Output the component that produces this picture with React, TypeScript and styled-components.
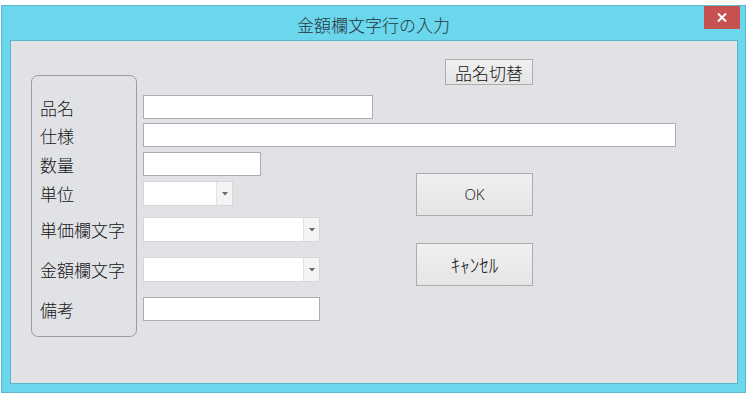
import React from 'react';
import styled, { createGlobalStyle } from 'styled-components';

const Global = createGlobalStyle`
  html, body { margin: 0; padding: 0; background: #ffffff; }
  body { font-family: "Noto Sans CJK JP", "Noto Sans", sans-serif; font-weight: 300; }
  * { box-sizing: border-box; }
`;

const Window = styled.div`
  margin: 5px 0 0 1px;
  width: 745px;
  height: 388px;
  border: 1px solid #5cb9d0;
  background: #6ad7ed;
  display: flex;
  flex-direction: column;
`;

const TitleBar = styled.div`
  height: 34px;
  display: grid;
  grid-template-columns: 1fr auto 1fr;
`;

const Title = styled.div`
  grid-column: 2;
  align-self: center;
  font-size: 17px;
  line-height: 1;
  color: #27363b;
  padding-top: 2px;
`;

const CloseButton = styled.button`
  grid-column: 3;
  justify-self: end;
  align-self: start;
  width: 36px;
  height: 23px;
  margin-right: 5px;
  border: none;
  padding: 0;
  background: #c75050;
  display: flex;
  align-items: center;
  justify-content: center;
`;

const Client = styled.div`
  flex: 1;
  margin: 0 7px 8px 8px;
  border: 1px solid #58b6cc;
  background: #e1e2e6;
  padding: 18px 0 0 20px;
  display: flex;
  align-items: flex-start;
  gap: 6px;
`;

const GroupBox = styled.div`
  margin-top: 16px;
  width: 106px;
  border: 1px solid #9c9c9c;
  border-radius: 7px;
  padding: 19px 0 15px 8px;
  display: flex;
  flex-direction: column;
`;

const LabelRow = styled.div<{ $h: number; $gap: number }>`
  height: ${p => p.$h}px;
  margin-top: ${p => p.$gap}px;
  display: flex;
  align-items: center;
  font-size: 17px;
  color: #151515;
  white-space: nowrap;
`;

const Fields = styled.div`
  width: 533px;
  display: flex;
  flex-direction: column;
`;

const Header = styled.div`
  height: 26px;
  display: flex;
  padding-left: 302px;
  margin-bottom: 10px;
`;

const FieldRow = styled.div<{ $h: number; $gap: number }>`
  height: ${p => p.$h}px;
  margin-top: ${p => p.$gap}px;
  display: flex;
`;

const Lower = styled.div`
  margin-top: 5px;
  display: flex;
`;

const LowerFields = styled.div`
  width: 273px;
  display: flex;
  flex-direction: column;
`;

const ButtonColumn = styled.div`
  width: 117px;
  display: flex;
  flex-direction: column;
`;

const TextBox = styled.input<{ $w: number }>`
  width: ${p => p.$w}px;
  height: 100%;
  border: 1px solid #abadb3;
  background: #ffffff;
  padding: 0 3px;
  font: inherit;
  outline: none;
`;

const Combo = styled.div<{ $w: number }>`
  width: ${p => p.$w}px;
  height: 100%;
  border: 1px solid #d6d7da;
  background: #ffffff;
  display: flex;
`;

const ComboText = styled.div`
  flex: 1;
`;

const ComboArrow = styled.div`
  width: 16px;
  border-left: 1px solid #e1e1e1;
  background: #f4f4f5;
  display: flex;
  align-items: center;
  justify-content: center;
`;

const PushButton = styled.button<{ $w: number; $h: number; $gap?: number; $size: number }>`
  width: ${p => p.$w}px;
  height: ${p => p.$h}px;
  margin-top: ${p => p.$gap ?? 0}px;
  border: 1px solid #acacac;
  background: linear-gradient(#f0f0f0, #e5e5e5);
  padding: 0;
  font-family: "Noto Sans CJK JP", "Noto Sans", sans-serif;
  font-weight: 300;
  font-size: ${p => p.$size}px;
  color: #111;
  display: flex;
  align-items: center;
  justify-content: center;
  line-height: 1;
`;

const Latin = styled.span`
  font-family: "Open Sans", "Noto Sans", sans-serif;
  font-weight: 300;
`;

type Spec = { label: string; gap: number; h: number; kind: 'text' | 'combo'; w: number };

const rows: Spec[] = [
  { label: '品名', gap: 0, h: 24, kind: 'text', w: 230 },
  { label: '仕様', gap: 4, h: 24, kind: 'text', w: 533 },
  { label: '数量', gap: 5, h: 24, kind: 'text', w: 118 },
  { label: '単位', gap: 5, h: 25, kind: 'combo', w: 90 },
  { label: '単価欄文字', gap: 11, h: 25, kind: 'combo', w: 177 },
  { label: '金額欄文字', gap: 15, h: 25, kind: 'combo', w: 177 },
  { label: '備考', gap: 15, h: 24, kind: 'text', w: 177 },
];

const Arrow = () => (
  <svg width="6" height="4" viewBox="0 0 6 4">
    <path d="M0 0 H6 L3 3.5 Z" fill="#6a6a6a" />
  </svg>
);

const Field = ({ s, gap }: { s: Spec; gap: number }) => (
  <FieldRow $h={s.h} $gap={gap}>
    {s.kind === 'text' ? (
      <TextBox $w={s.w} defaultValue="" />
    ) : (
      <Combo $w={s.w}>
        <ComboText />
        <ComboArrow>
          <Arrow />
        </ComboArrow>
      </Combo>
    )}
  </FieldRow>
);

export default function App() {
  const upper = rows.slice(0, 2);
  const lower = rows.slice(2);
  return (
    <>
      <Global />
      <Window>
        <TitleBar>
          <Title>金額欄文字行の入力</Title>
          <CloseButton aria-label="close">
            <svg width="10" height="9" viewBox="0 0 10 9">
              <path d="M1 0.5 L9 8.5 M9 0.5 L1 8.5" stroke="#ffffff" strokeWidth="2" />
            </svg>
          </CloseButton>
        </TitleBar>
        <Client>
          <GroupBox>
            {rows.map(r => (
              <LabelRow key={r.label} $h={r.h} $gap={r.gap}>
                {r.label}
              </LabelRow>
            ))}
          </GroupBox>
          <Fields>
            <Header>
              <PushButton $w={88} $h={26} $size={17}>品名切替</PushButton>
            </Header>
            {upper.map(r => (
              <Field key={r.label} s={r} gap={r.gap} />
            ))}
            <Lower>
              <LowerFields>
                {lower.map((r, i) => (
                  <Field key={r.label} s={r} gap={i === 0 ? 0 : r.gap} />
                ))}
              </LowerFields>
              <ButtonColumn>
                <PushButton $w={117} $h={43} $gap={21} $size={15}>
                  <Latin>OK</Latin>
                </PushButton>
                <PushButton $w={117} $h={43} $gap={27} $size={19}>ｷｬﾝｾﾙ</PushButton>
              </ButtonColumn>
            </Lower>
          </Fields>
        </Client>
      </Window>
    </>
  );
}
